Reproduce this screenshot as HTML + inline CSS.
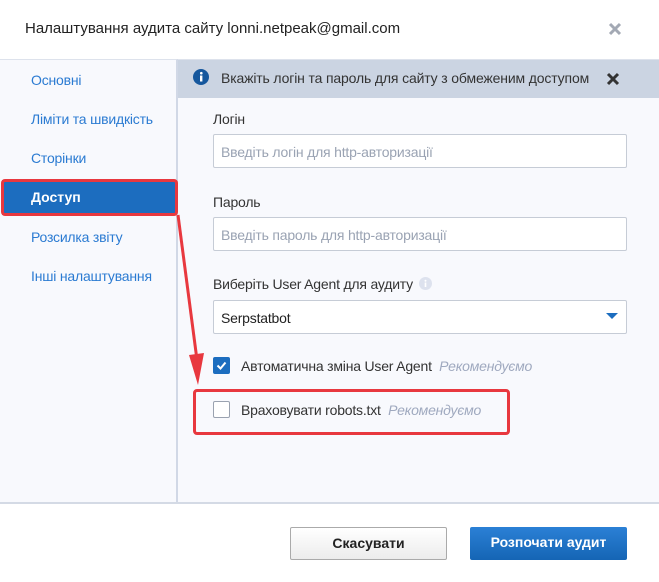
<!DOCTYPE html>
<html><head><meta charset="utf-8"><style>
*{box-sizing:border-box;margin:0;padding:0}
body{width:659px;height:582px;background:#fff;font-family:"Liberation Sans",sans-serif;position:relative;overflow:hidden;color:#222}
.abs{position:absolute}
.title{left:25px;top:20px;font-size:15px;color:#222}
.side{left:0;top:59px;width:178px;height:444px;background:#f8f9fd;border-top:1px solid #dde2ec;border-right:2px solid #d1d8e6}
.side div{position:absolute;left:31px;font-size:14px;color:#2b7bd2;letter-spacing:-0.2px}
.main{left:178px;top:59px;width:481px;height:444px;background:#f8f9fd;border-top:1px solid #dde2ec}
.info{left:178px;top:60px;width:481px;height:38px;background:#cbd4e2}
.lbl{font-size:14px;color:#333;letter-spacing:-0.2px}
.inp{left:213px;width:414px;height:34px;background:#fff;border:1px solid #c6ccd6;border-radius:2px;font-size:14px;padding:9px 7px;color:#9aa3b3;letter-spacing:-0.2px}
.sep{left:0;top:502px;width:659px;height:2px;background:#d4dae5}
.btn{height:33px;border-radius:2px;font-size:14px;font-weight:bold;text-align:center;line-height:31px}
.rec{color:#9fa9bf;font-style:italic}
</style></head><body>
<div class="abs title">Налаштування аудита сайту lonni.netpeak@gmail.com</div>
<svg class="abs" style="left:608px;top:22px" width="14" height="14"><path d="M2 2L12 12M12 2L2 12" stroke="#a3a9b4" stroke-width="3"/></svg>
<div class="abs side">
<div style="top:12px">Основні</div>
<div style="top:51px">Ліміти та швидкість</div>
<div style="top:90px">Сторінки</div>
<div style="top:169px">Розсилка звіту</div>
<div style="top:208px">Інші налаштування</div>
</div>
<div class="abs main"></div>
<div class="abs info"></div>
<svg class="abs" style="left:193px;top:69px" width="16" height="16"><circle cx="8" cy="8" r="8" fill="#15579d"/><rect x="7" y="6.5" width="2.4" height="6" fill="#fff"/><circle cx="8.3" cy="4.2" r="1.3" fill="#fff"/></svg>
<div class="abs" style="left:221px;top:70px;font-size:14px;color:#333;letter-spacing:-0.15px">Вкажіть логін та пароль для сайту з обмеженим доступом</div>
<svg class="abs" style="left:606px;top:72px" width="14" height="14"><path d="M2 2L12 12M12 2L2 12" stroke="#333" stroke-width="3"/></svg>
<div class="abs" style="left:2px;top:180px;width:174px;height:35px;background:#1c6dbf"></div>
<div class="abs" style="left:31px;top:189px;font-size:14px;font-weight:bold;color:#fff">Доступ</div>
<div class="abs" style="left:1px;top:179px;width:177px;height:37px;border:3px solid #e8383f;border-radius:4px"></div>
<div class="abs lbl" style="left:213px;top:111px">Логін</div>
<div class="abs inp" style="top:134px">Введіть логін для http-авторизації</div>
<div class="abs lbl" style="left:213px;top:194px">Пароль</div>
<div class="abs inp" style="top:217px">Введіть пароль для http-авторизації</div>
<div class="abs lbl" style="left:213px;top:276px">Виберіть User Agent для аудиту</div>
<svg class="abs" style="left:419px;top:277px" width="13" height="13"><circle cx="6.5" cy="6.5" r="6.5" fill="#dde2ee"/><rect x="5.7" y="5.5" width="1.6" height="4.5" fill="#fff"/><circle cx="6.5" cy="3.8" r="1" fill="#fff"/></svg>
<div class="abs inp" style="top:300px;color:#222">Serpstatbot</div>
<svg class="abs" style="left:606px;top:313px" width="12" height="7"><path d="M0 0H12L6 6Z" fill="#1c6dbf"/></svg>
<div class="abs" style="left:213px;top:357px;width:17px;height:17px;background:#1c6dbf;border-radius:2px"></div>
<svg class="abs" style="left:213px;top:357px" width="17" height="17"><path d="M4.5 8.5L7.5 11.5L12.5 5.5" stroke="#fff" stroke-width="2" fill="none"/></svg>
<div class="abs lbl" style="left:241px;top:358px">Автоматична зміна User Agent <span class="rec">&nbsp;Рекомендуємо</span></div>
<div class="abs" style="left:213px;top:401px;width:17px;height:17px;background:#fff;border:1px solid #9aa2b0;border-radius:2px"></div>
<div class="abs lbl" style="left:241px;top:402px">Враховувати robots.txt <span class="rec">&nbsp;Рекомендуємо</span></div>
<div class="abs" style="left:193px;top:389px;width:317px;height:46px;border:3px solid #e8383f;border-radius:4px"></div>
<svg class="abs" style="left:170px;top:210px" width="40" height="180"><path d="M8 5L27 150" stroke="#e8383f" stroke-width="3"/><path d="M19 145L28 175L34 143Z" fill="#e8383f"/></svg>
<div class="abs sep"></div>
<div class="abs btn" style="left:290px;top:527px;width:157px;border:1px solid #aaa;background:linear-gradient(#fff,#ececec);color:#222">Скасувати</div>
<div class="abs btn" style="left:470px;top:527px;width:157px;background:linear-gradient(#2b80d6,#1565b5);color:#fff">Розпочати аудит</div>
</body></html>
